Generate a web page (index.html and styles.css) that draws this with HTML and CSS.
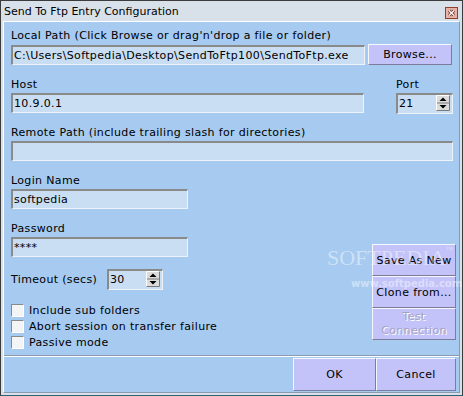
FILE: index.html
```html
<!DOCTYPE html>
<html lang="en">
<head>
  <meta charset="UTF-8">
  <title>Send To Ftp Entry Configuration</title>
  <link rel="stylesheet" href="styles.css">
</head>
<body>
  <div class="window">
    <div class="titlebar">
      <span class="title">Send To Ftp Entry Configuration</span>
      <svg class="close" width="13" height="12" viewBox="0 0 13 12">
        <rect x="0.5" y="0.5" width="12" height="11" fill="#e7b3a6" stroke="#8e3f30"/>
        <path d="M4 3.5 L9 8.5 M9 3.5 L4 8.5" stroke="#6a2a20" stroke-width="3"/>
        <path d="M4 3.5 L9 8.5 M9 3.5 L4 8.5" stroke="#fff" stroke-width="1.4"/>
      </svg>
    </div>

    <div class="client">
      <div class="form">
        <div class="lbl">Local Path (Click Browse or drag'n'drop a file or folder)</div>
        <div class="path-row">
          <div class="field path">C:\Users\Softpedia\Desktop\SendToFtp100\SendToFtp.exe</div>
          <div class="btn browse">Browse...</div>
        </div>

        <div class="host-row">
          <div class="host-col">
            <div class="lbl">Host</div>
            <div class="field host">10.9.0.1</div>
          </div>
          <div class="port-col">
            <div class="lbl">Port</div>
            <div class="field spin">
              <span class="spin-val">21</span>
              <svg class="arrows" width="14" height="16" viewBox="0 0 14 16">
                <rect x="0" y="0" width="14" height="16" fill="#dcdcdc"/>
                <path d="M0.5 15.5 V0.5 H13.5" fill="none" stroke="#fff"/>
                <path d="M0.5 15.5 H13.5 V0.5" fill="none" stroke="#7a7a7a"/>
                <path d="M1 8 H13" stroke="#7a7a7a"/>
                <path d="M7 2.5 L10.5 6 H3.5 Z" fill="#000"/>
                <path d="M3.5 10 H10.5 L7 13.5 Z" fill="#000"/>
              </svg>
            </div>
          </div>
        </div>

        <div class="lbl remote-lbl">Remote Path (include trailing slash for directories)</div>
        <div class="field remote"></div>

        <div class="lower">
          <div class="lower-left">
            <div class="lbl">Login Name</div>
            <div class="field short">softpedia</div>
            <div class="lbl gap-lbl">Password</div>
            <div class="field short pass">****</div>

            <div class="timeout-row">
              <span class="timeout-lbl">Timeout (secs)</span>
              <div class="field spin timeout">
                <span class="spin-val">30</span>
                <svg class="arrows" width="14" height="16" viewBox="0 0 14 16">
                  <rect x="0" y="0" width="14" height="16" fill="#dcdcdc"/>
                  <path d="M0.5 15.5 V0.5 H13.5" fill="none" stroke="#fff"/>
                  <path d="M0.5 15.5 H13.5 V0.5" fill="none" stroke="#7a7a7a"/>
                  <path d="M1 8 H13" stroke="#7a7a7a"/>
                  <path d="M7 2.5 L10.5 6 H3.5 Z" fill="#000"/>
                  <path d="M3.5 10 H10.5 L7 13.5 Z" fill="#000"/>
                </svg>
              </div>
            </div>

            <div class="checks">
              <label class="check"><span class="box"></span>Include sub folders</label>
              <label class="check"><span class="box"></span>Abort session on transfer failure</label>
              <label class="check"><span class="box"></span>Passive mode</label>
            </div>
          </div>

          <div class="side-buttons">
            <div class="btn side">Save As New</div>
            <div class="btn side">Clone from...</div>
            <div class="btn side disabled">Test<br>Connection</div>
          </div>
        </div>
      </div>

      <div class="bottom-panel">
        <div class="btn ok">OK</div>
        <div class="btn cancel">Cancel</div>
      </div>

      <div class="watermark">
        <div class="wm-big">SOFTPEDIA<sup>™</sup></div>
        <div class="wm-small">www.softpedia.com</div>
      </div>
    </div>
  </div>
</body>
</html>
```

FILE: styles.css
```css
* { box-sizing: border-box; }
body { margin: 0; font-family: "DejaVu Sans", sans-serif; font-size: 11px; line-height: 13px; letter-spacing: 0.35px; color: #000; }

.window { width: 463px; height: 396px; border: 1px solid #3c3c3c; border-bottom-color: #2b6470; background: #d8e0ea; padding: 0 2px 2px; display: flex; flex-direction: column; }
.titlebar { height: 20px; display: flex; align-items: center; justify-content: space-between; padding: 0 2px 0 1px; letter-spacing: 0; }
.title { padding-top: 1px; }
.close { display: block; margin-top: 3px; }

.client { flex: 1; position: relative; display: flex; flex-direction: column; background: #a6caf0; border: 1px solid; border-color: #fff #8a9bb0 #8a9bb0 #fff; }
.form { padding: 7px 3px 0 7px; display: flex; flex-direction: column; }
.lbl { height: 13px; white-space: nowrap; }

.field { height: 20px; background: #c9ddf3; border-style: solid; border-width: 2px 1px 1px 2px; border-color: #8a8a8a #eef3fa #eef3fa #8a8a8a; padding: 2px 0 0 1px; white-space: nowrap; overflow: hidden; }
.btn { display: flex; align-items: center; justify-content: center; text-align: center; background: #c3c3f9; border: 1px solid; border-color: #f6f6ff #7c7c9c #7c7c9c #f6f6ff; }

.path-row { display: flex; gap: 3px; margin: 2px 3px 0 0; }
.path { width: 354px; margin-top: 1px; }
.browse { width: 84px; height: 21px; }

.host-row { display: flex; justify-content: space-between; margin: 13px 3px 0 0; }
.host-col .field { margin-top: 2px; }
.host { width: 353px; }
.port-col { width: 57px; }
.port-col .spin { margin-top: 2px; }

.spin { height: 21px; display: flex; justify-content: space-between; padding: 0 2px 0 1px; }
.spin-val { padding-top: 2px; }
.arrows { display: block; }

.remote-lbl { margin-top: 12px; }
.remote { margin: 2px 3px 0 0; }

.lower { display: flex; justify-content: space-between; margin-top: 13px; }
.lower-left { display: flex; flex-direction: column; }
.short { width: 177px; margin-top: 2px; }
.gap-lbl { margin-top: 13px; }

.timeout-row { display: flex; align-items: center; height: 21px; margin-top: 12px; }
.timeout-lbl { width: 96px; }
.timeout { width: 56px; }

.checks { margin-top: 12px; display: flex; flex-direction: column; }
.check { height: 16px; display: flex; align-items: center; gap: 5px; white-space: nowrap; }
.box { width: 13px; height: 13px; background: #f2f4f6; border-style: solid; border-width: 1px; border-color: #8a8a8a #ffffff #ffffff #8a8a8a; }

.side-buttons { align-self: flex-end; margin-bottom: 10px; display: flex; flex-direction: column; }
.side { width: 84px; height: 32px; }
.disabled { color: #a4a4c4; text-shadow: 1px 1px 0 #fff; line-height: 14px; }

.bottom-panel { flex: 1; margin-top: 5px; border-top: 1px solid #8a9bb0; box-shadow: inset 0 1px 0 #fff; display: flex; justify-content: flex-end; padding: 2px 3px 0 0; }
.ok { width: 83px; height: 33px; }
.cancel { width: 80px; height: 33px; }

.watermark { position: absolute; left: 323px; top: 224px; color: rgba(255, 255, 255, 0.45); pointer-events: none; letter-spacing: 0; }
.wm-big { font-family: "Liberation Serif", serif; font-size: 22px; line-height: 24px; }
.wm-big sup { font-size: 8px; vertical-align: top; line-height: 8px; }
.wm-small { font-size: 10px; line-height: 12px; margin: 8px 0 0 24px; font-weight: bold; }
```
